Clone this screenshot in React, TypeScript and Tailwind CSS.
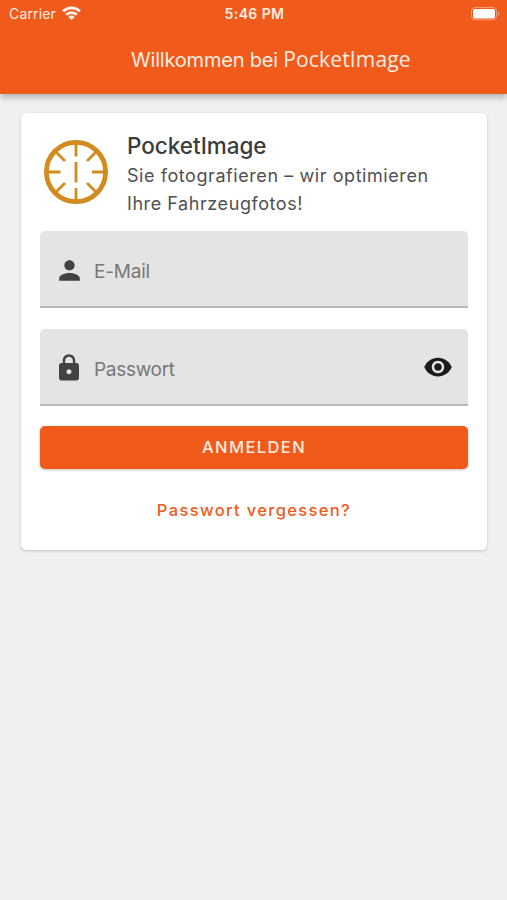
import { useState } from "react";
import { MdLock, MdPerson, MdVisibility } from "react-icons/md";

function StatusBar() {
    return (
        <div className="grid h-[27px] grid-cols-3 items-center pl-[9px] pr-[7px] text-[14px] text-[#ffede2]">
            <div className="flex items-center gap-[6px]">
                <span className="tracking-[0.15px]">Carrier</span>
                <svg viewBox="0 0 19 14" className="mb-[2px] h-[14px] w-[19px]" fill="none" stroke="#fff5ee" strokeWidth="2.9">
                    <path d="M1.1 5.3a11.9 11.9 0 0 1 16.8 0" />
                    <path d="M4.2 8.8a7.5 7.5 0 0 1 10.6 0" />
                    <path d="M9.5 14 6.3 10.9a4.6 4.6 0 0 1 6.4 0z" fill="#fff5ee" stroke="none" />
                </svg>
            </div>
            <div className="text-center font-semibold tracking-[0.4px]">5:46 PM</div>
            <div className="flex justify-end">
                <svg viewBox="0 0 29 14" className="h-[14px] w-[29px]">
                    <rect x="0.5" y="0.5" width="25" height="12.4" rx="3.5" fill="none" stroke="#fff" strokeOpacity="0.4" />
                    <rect x="2" y="2" width="22" height="9.4" rx="2" fill="#fff" />
                    <path d="M27 4.6v4.2c1.6-.6 1.6-3.6 0-4.2z" fill="#fff" fillOpacity="0.45" />
                </svg>
            </div>
        </div>
    );
}

function Logo() {
    return (
        <svg viewBox="0 0 64 64" className="h-[64px] w-[64px] shrink-0" fill="none" stroke="#d38b1e">
            <circle cx="32" cy="32" r="29.6" strokeWidth="4.8" />
            <g strokeWidth="2.8">
                <path d="M32 4v12.5M32 48v12M4 32h12.5M48 32h12" />
                <path d="M12 12l9 9M52 12l-9 9M12 52l9-9M52 52l-9-9" />
                <path d="M32 22v20.5" />
            </g>
        </svg>
    );
}

export default function LoginScreen() {
    const [email, setEmail] = useState("");
    const [password, setPassword] = useState("");
    const [showPassword, setShowPassword] = useState(false);

    return (
        <div className="flex min-h-screen flex-col bg-[#f0f0f0] font-['Inter',sans-serif]">
            {/* Header */}
            <header className="h-[94px] bg-[#f05a1a] shadow-[0_3px_7px_rgba(0,0,0,0.28)]">
                <StatusBar />
                <h1 className="flex h-[66px] items-center whitespace-pre pl-[131px] text-[20px] text-[#ffede2]">
                    <span className="tracking-[-0.2px]">Willkommen bei </span>
                    <span className="font-['Open_Sans',sans-serif] text-[21px] tracking-[0.15px]">PocketImage</span>
                </h1>
            </header>

            {/* Login card */}
            <main className="mr-[20px] ml-[20.5px] mt-[19px] h-[437px] rounded-[5px] bg-white pr-[19px] pl-[19.5px] shadow-[0_1px_3px_rgba(0,0,0,0.2)]">
                <div className="flex h-[118px] pl-[4px] pt-[18px]">
                    <div className="pt-[9px]">
                        <Logo />
                    </div>
                    <div className="pl-[19px]">
                        <h2 className="h-[31px] text-[22.5px] leading-[29px] font-medium tracking-[-0.03px] text-[#3c3c3c]">PocketImage</h2>
                        <p className="w-[330px] text-[18px] leading-[28px] tracking-[0.57px] text-[#505050]">
                            Sie fotografieren – wir optimieren<br />
                            Ihre Fahrzeugfotos!
                        </p>
                    </div>
                </div>

                <form onSubmit={(e) => e.preventDefault()}>
                    <label className="flex h-[77px] items-center rounded-t-[5px] border-b-2 border-[#b8b8b8] bg-[#e4e4e4] pl-[14px]">
                        <MdPerson className="mt-[3px] h-[31px] w-[31px] text-[#424242]" />
                        <input
                            type="email"
                            placeholder="E-Mail"
                            value={email}
                            onChange={(e) => setEmail(e.target.value)}
                            className="ml-[9px] mt-[8px] w-[300px] text-[19px] tracking-[-0.2px] outline-none placeholder:text-[#777777]"
                        />
                    </label>

                    <label className="mt-[21px] flex h-[77px] items-center rounded-t-[5px] border-b-2 border-[#b8b8b8] bg-[#e4e4e4] pl-[14px] pr-[15px]">
                        <MdLock className="mt-[2px] h-[30px] w-[30px] text-[#424242]" />
                        <input
                            type={showPassword ? "text" : "password"}
                            placeholder="Passwort"
                            value={password}
                            onChange={(e) => setPassword(e.target.value)}
                            className="ml-[10px] mt-[8px] w-[300px] text-[19px] tracking-[-0.3px] outline-none placeholder:text-[#777777]"
                        />
                        <button type="button" className="ml-auto" onClick={() => setShowPassword(!showPassword)}>
                            <MdVisibility className="mt-[1px] h-[30px] w-[30px] text-[#1c1c1c]" />
                        </button>
                    </label>

                    <button
                        type="submit"
                        className="mt-[20px] h-[43px] w-full rounded-[5px] bg-[#f05a1a] text-[16.5px] font-medium tracking-[1.4px] text-[#ffede2] shadow-[0_1px_3px_rgba(0,0,0,0.25)]"
                    >
                        ANMELDEN
                    </button>
                </form>

                <div className="mt-[29px] text-center">
                    <a href="#" className="text-[16.5px] font-medium tracking-[1.35px] text-[#f05a1a]">Passwort vergessen?</a>
                </div>
            </main>
        </div>
    );
}
